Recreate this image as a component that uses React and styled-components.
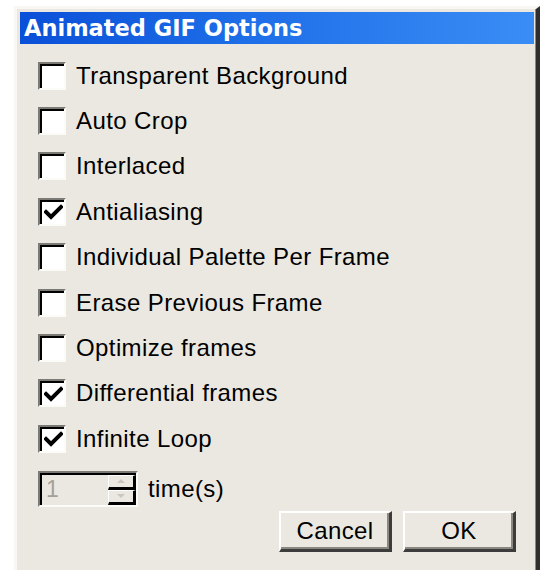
import React from "react";
import { styled, createGlobalStyle } from "styled-components";

const GlobalStyle = createGlobalStyle`
  html, body {
    margin: 0;
    padding: 0;
    background: #ffffff;
    overflow: hidden;
  }
`;

const options = [
  { label: "Transparent Background", checked: false },
  { label: "Auto Crop", checked: false },
  { label: "Interlaced", checked: false },
  { label: "Antialiasing", checked: true },
  { label: "Individual Palette Per Frame", checked: false },
  { label: "Erase Previous Frame", checked: false },
  { label: "Optimize frames", checked: false },
  { label: "Differential frames", checked: true },
  { label: "Infinite Loop", checked: true },
];

function CheckMark() {
  return (
    <svg width="19" height="17" viewBox="0 0 19 17">
      <path
        d="M2 8 L7 13 L17 3"
        fill="none"
        stroke="#000"
        strokeWidth="4"
        strokeLinecap="square"
      />
    </svg>
  );
}

function Arrow({ up }) {
  return (
    <svg width="10" height="6" viewBox="0 0 10 6">
      <path d={up ? "M1 5 L5 1 L9 5 Z" : "M1 1 L5 5 L9 1 Z"} fill="#c9c7c0" />
    </svg>
  );
}

function App() {
  return (
    <>
      <GlobalStyle />
      <Window>
        <TitleBar>Animated GIF Options</TitleBar>
        <Body>
          <OptionList>
            {options.map((o) => (
              <Row key={o.label}>
                <Box>{o.checked && <CheckMark />}</Box>
                <Label>{o.label}</Label>
              </Row>
            ))}
          </OptionList>
          <LoopRow>
            <Spin>
              <SpinValue>1</SpinValue>
              <SpinButtons>
                <SpinButton>
                  <Arrow up />
                </SpinButton>
                <SpinButton>
                  <Arrow />
                </SpinButton>
              </SpinButtons>
            </Spin>
            <Label>time(s)</Label>
          </LoopRow>
          <Buttons>
            <Button>Cancel</Button>
            <Button>OK</Button>
          </Buttons>
        </Body>
      </Window>
    </>
  );
}

const Window = styled.div`
  margin: 6px 0 0 14px;
  width: 526px;
  height: 564px;
  box-sizing: border-box;
  background: #ebe8e1;
  border-style: solid;
  border-width: 3px 4px 0 3px;
  border-color: #f8f7f3 #2e2e2e #2e2e2e #f8f7f3;
  box-shadow: inset -1px 0 #8a8880;
  padding: 3px 2px 0 3px;
  font-family: "Liberation Sans", Arial, sans-serif;
`;

const TitleBar = styled.div`
  height: 32px;
  display: flex;
  align-items: center;
  padding-left: 4px;
  background: linear-gradient(90deg, #0a50d8 0%, #1e6fe8 45%, #3a8df5 100%);
  color: #ffffff;
  font-family: "DejaVu Sans", Verdana, sans-serif;
  font-weight: bold;
  font-size: 22.5px;
`;

const Body = styled.div`
  padding: 9px 18px 0 18px;
  display: flex;
  flex-direction: column;
`;

const OptionList = styled.div`
  display: flex;
  flex-direction: column;
`;

const Row = styled.div`
  height: 45.4px;
  display: flex;
  align-items: center;
  gap: 10px;
`;

const Box = styled.div`
  width: 28px;
  height: 28px;
  box-sizing: border-box;
  background: #ffffff;
  border-style: solid;
  border-width: 2px;
  border-color: #7b7a74 #fbfbf8 #fbfbf8 #7b7a74;
  box-shadow: inset 2px 2px #000000;
  display: flex;
  align-items: center;
  justify-content: center;
  padding: 2px 0 0 2px;
`;

const Label = styled.span`
  font-size: 24px;
  letter-spacing: 0.4px;
  color: #000000;
  white-space: nowrap;
`;

const LoopRow = styled.div`
  margin-top: 9px;
  height: 36px;
  display: flex;
  align-items: center;
  gap: 10px;
`;

const Spin = styled.div`
  width: 100px;
  height: 36px;
  box-sizing: border-box;
  display: flex;
  align-items: stretch;
  border-style: solid;
  border-width: 2px;
  border-color: #7b7a74 #fbfbf8 #fbfbf8 #7b7a74;
  box-shadow: inset 2px 2px #000000;
  padding: 2px 0 0 2px;
`;

const SpinValue = styled.div`
  flex: 1;
  display: flex;
  align-items: center;
  padding-left: 4px;
  font-size: 23px;
  color: #a3a19a;
`;

const SpinButtons = styled.div`
  width: 28px;
  display: flex;
  flex-direction: column;
`;

const SpinButton = styled.div`
  flex: 1;
  display: flex;
  align-items: center;
  justify-content: center;
  box-sizing: border-box;
  border-right: 3px solid #000000;
  border-bottom: 3px solid #000000;
  border-top: 1px solid #ffffff;
  border-left: 1px solid #ffffff;
`;

const Buttons = styled.div`
  margin-top: 4px;
  display: flex;
  justify-content: flex-end;
  gap: 11px;
`;

const Button = styled.button`
  width: 113px;
  height: 41px;
  box-sizing: border-box;
  background: #ebe8e1;
  border-style: solid;
  border-width: 2px 3px 3px 2px;
  border-color: #ffffff #3c3c3c #3c3c3c #ffffff;
  box-shadow: inset -2px -2px #8a8880;
  font-family: "Liberation Sans", Arial, sans-serif;
  font-size: 24px;
  letter-spacing: 0.4px;
  color: #000000;
  padding: 0;
`;

export default App;
